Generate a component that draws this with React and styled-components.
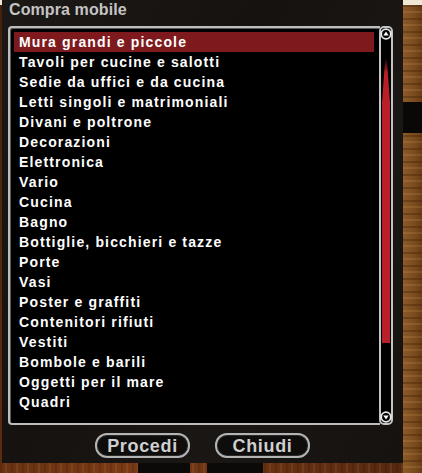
import React from "react";
import styled, { createGlobalStyle } from "styled-components";

const Global = createGlobalStyle`
  html, body { margin: 0; padding: 0; background: #5a3316; }
  body { width: 422px; height: 473px; overflow: hidden; }
  #root { width: 422px; height: 473px; }
`;

const Scene = styled.div`
  position: relative;
  width: 422px;
  height: 473px;
  box-sizing: border-box;
  padding: 0 19px 10px 2px;
  background:
    linear-gradient(180deg, #efe6d4 0, #efe6d4 5px, transparent 5px),
    repeating-linear-gradient(90deg, rgba(0,0,0,0.12) 0 2px, transparent 2px 5px, rgba(255,220,160,0.08) 5px 7px, transparent 7px 11px),
    radial-gradient(ellipse at 30% 100%, #7a3a14 0%, #5a2a10 60%, #3a1a08 100%),
    #7a4a20;
  overflow: hidden;
`;

const RightWood = styled.div`
  position: absolute;
  right: 0;
  top: 5px;
  width: 19px;
  bottom: 0;
  background:
    linear-gradient(180deg, transparent 0, transparent 97px, #0a0806 97px, #0a0806 128px, transparent 128px),
    repeating-linear-gradient(180deg, rgba(60,30,5,0.35) 0 2px, transparent 2px 6px, rgba(255,200,130,0.12) 6px 8px, transparent 8px 13px),
    linear-gradient(90deg, #8b5a28, #7a4b1e 60%, #6a3c16);
`;

const Legs = styled.div`
  position: absolute;
  bottom: 0;
  left: ${(p) => p.$left}px;
  width: ${(p) => p.$w}px;
  height: 14px;
  background: #0c0a09;
  border-radius: 4px 4px 0 0;
`;

const Panel = styled.div`
  position: relative;
  z-index: 1;
  height: 463px;
  box-sizing: border-box;
  display: flex;
  flex-direction: column;
  background:
    linear-gradient(120deg, rgba(40,36,32,0.35) 0%, rgba(0,0,0,0) 40%, rgba(40,36,32,0.25) 70%, rgba(0,0,0,0) 100%),
    #151210;
  padding: 0 6px 5px 6px;
  font-family: "Liberation Sans", Arial, sans-serif;
`;

const Title = styled.div`
  height: 26px;
  line-height: 19px;
  padding-left: 1px;
  font-size: 16px;
  font-weight: bold;
  color: #c4c4c4;
  letter-spacing: 0.1px;
`;

const Frame = styled.div`
  display: flex;
  height: 399px;
  padding-right: 4px;
`;

const ListBox = styled.div`
  flex: 1;
  box-sizing: border-box;
  border: 2px solid #bdbdbd;
  border-right: none;
  border-radius: 4px 0 0 4px;
  background: #000;
  padding: 4px 6px 0 4px;
  box-shadow: inset 1px 1px 0 #5a5a5a;
  margin-right: -1px;
`;

const Item = styled.div`
  height: 20px;
  line-height: 20px;
  padding-left: 5px;
  font-size: 14px;
  font-weight: bold;
  color: #fff;
  letter-spacing: 1.15px;
  white-space: nowrap;
  background: ${(p) => (p.$selected ? "#7e1a1e" : "transparent")};
`;

const ScrollBar = styled.div`
  position: relative;
  width: 14px;
  box-sizing: border-box;
  border: 2px solid #c4c4c4;
  border-radius: 5px;
  background: #000;
  display: flex;
  flex-direction: column;
  align-items: center;
  justify-content: space-between;
`;

const Arrow = styled.svg`
  display: block;
  width: 12px;
  height: 12px;
  flex: none;
`;

const Thumb = styled.svg`
  position: absolute;
  left: 1px;
  top: 30px;
  width: 8px;
  height: 285px;
`;

const Buttons = styled.div`
  display: flex;
  justify-content: center;
  gap: 25px;
  margin-top: 8px;
`;

const Button = styled.button`
  width: 95px;
  height: 25px;
  box-sizing: border-box;
  border: 2px solid #b4b4b4;
  border-radius: 12px;
  background: #0e0d0c;
  color: #cfcfcf;
  font-family: "Liberation Sans", Arial, sans-serif;
  font-size: 18px;
  font-weight: bold;
  line-height: 20px;
  padding: 0;
  letter-spacing: 0.65px;
  box-shadow: inset 0 0 0 1px #2a2a2a;
`;

const items = [
  "Mura grandi e piccole",
  "Tavoli per cucine e salotti",
  "Sedie da uffici e da cucina",
  "Letti singoli e matrimoniali",
  "Divani e poltrone",
  "Decorazioni",
  "Elettronica",
  "Vario",
  "Cucina",
  "Bagno",
  "Bottiglie, bicchieri e tazze",
  "Porte",
  "Vasi",
  "Poster e graffiti",
  "Contenitori rifiuti",
  "Vestiti",
  "Bombole e barili",
  "Oggetti per il mare",
  "Quadri",
];

function ScrollArrow({ down }) {
  return (
    <Arrow viewBox="0 0 12 12">
      <circle cx="6" cy="6" r="4.8" fill="none" stroke="#e8e8e8" strokeWidth="1.8" />
      {down ? (
        <polygon points="3.3,4.5 8.7,4.5 6,8.5" fill="#ffffff" />
      ) : (
        <polygon points="3.3,7.5 8.7,7.5 6,3.5" fill="#ffffff" />
      )}
    </Arrow>
  );
}

export default function App() {
  return (
    <>
      <Global />
      <Scene>
        <RightWood />
        <Legs $left={138} $w={52} />
        <Legs $left={207} $w={56} />
        <Panel>
          <Title>Compra mobile</Title>
          <Frame>
            <ListBox>
              {items.map((t, i) => (
                <Item key={t} $selected={i === 0}>
                  {t}
                </Item>
              ))}
            </ListBox>
            <ScrollBar>
              <ScrollArrow />
              <Thumb viewBox="0 0 8 285" preserveAspectRatio="none">
                <defs>
                  <linearGradient id="tg" x1="0" y1="0" x2="0" y2="1">
                    <stop offset="0" stopColor="#000" />
                    <stop offset="0.05" stopColor="#b81f27" />
                    <stop offset="1" stopColor="#b81f27" />
                  </linearGradient>
                </defs>
                <path d="M3.2 0 L4.8 0 L8 45 L8 285 L0 285 L0 45 Z" fill="url(#tg)" />
              </Thumb>
              <ScrollArrow down />
            </ScrollBar>
          </Frame>
          <Buttons>
            <Button>Procedi</Button>
            <Button>Chiudi</Button>
          </Buttons>
        </Panel>
      </Scene>
    </>
  );
}
